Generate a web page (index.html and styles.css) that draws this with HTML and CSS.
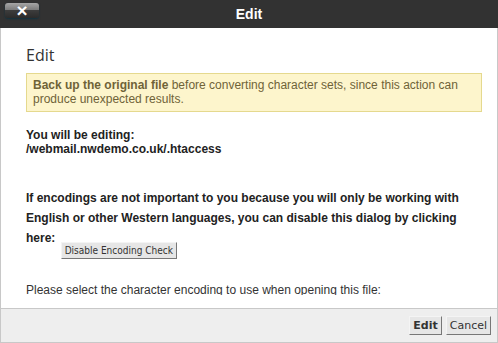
FILE: index.html
```html
<!DOCTYPE html>
<html lang="en">
<head>
  <meta charset="UTF-8" />
  <title>Edit</title>
  <link rel="stylesheet" href="styles.css">
</head>
<body>
  <div class="dialog">
    <div class="titlebar">
      <button class="close-btn" title="Close">&times;</button>
      <span class="title">Edit</span>
    </div>

    <div class="dialog-body">
      <div class="scroll">
        <h2>Edit</h2>
        <div class="warning">
          <strong>Back up the original file</strong> before converting character sets, since this action can produce unexpected results.
        </div>

        <p class="editing">
          You will be editing:<br>
          /webmail.nwdemo.co.uk/.htaccess
        </p>

        <p class="encoding-note">
          If encodings are not important to you because you will only be working with English or other Western languages, you can disable this dialog by clicking here:
          <button class="btn btn-small">Disable Encoding Check</button>
        </p>

        <p class="select-note">Please select the character encoding to use when opening this file:</p>
      </div>
    </div>

    <div class="footer">
      <button class="btn btn-primary">Edit</button>
      <button class="btn">Cancel</button>
    </div>
  </div>
</body>
</html>
```

FILE: styles.css
```css
body {
  margin: 0;
  font-family: "Liberation Sans", Arial, sans-serif;
  font-size: 12px;
  color: #222;
  background: #fff;
}
.dialog {
  width: 498px;
  height: 343px;
  display: flex;
  flex-direction: column;
}
.titlebar {
  position: relative;
  height: 28px;
  background: #323232;
  display: flex;
  align-items: center;
  justify-content: center;
}
.title {
  color: #fff;
  font-weight: bold;
  font-size: 14px;
}
.close-btn {
  position: absolute;
  left: 5px;
  top: 3px;
  width: 34px;
  height: 15px;
  padding: 0;
  border: none;
  border-radius: 3px;
  background: linear-gradient(#a6a6a6 0, #7c7c7c 45%, #3c3c3c 50%, #2b2b2b 100%);
  box-shadow: 0 1px 2px rgba(0, 50, 70, 0.7);
  color: #fff;
  font-family: "Liberation Sans", sans-serif;
  font-size: 19px;
  font-weight: bold;
  line-height: 15px;
}
.dialog-body {
  flex: 1;
  display: flex;
  flex-direction: column;
  border-left: 1px solid #c8c8c8;
  border-right: 1px solid #c8c8c8;
  padding-bottom: 13px;
  min-height: 0;
}
.scroll {
  flex: 1;
  overflow: hidden;
  padding: 16px 15px 0 25px;
}
h2 {
  margin: 0;
  font-family: "Open Sans", sans-serif;
  font-weight: normal;
  font-size: 16px;
  line-height: 22px;
  color: #333;
}
.warning {
  margin-top: 7px;
  background: #fdf5cc;
  border: 1px solid #e5d98e;
  padding: 4px 6px 5px;
  line-height: 14px;
  color: #6f6338;
}
.editing {
  margin: 16px 0 0;
  font-weight: bold;
  line-height: 14px;
}
.encoding-note {
  margin: 32px 0 0;
  font-weight: bold;
  line-height: 20px;
}
.select-note {
  margin: 24px 0 0;
  line-height: 14px;
  color: #333;
}
.btn {
  font-family: "DejaVu Sans", sans-serif;
  font-size: 11px;
  line-height: 13px;
  padding: 2px 3px;
  color: #333;
  background: #e6e6e6;
  border: 1px solid;
  border-color: #f4f4f4 #777 #777 #f4f4f4;
  border-radius: 0;
}
.btn-primary {
  font-weight: bold;
}
.btn-small {
  font-family: "DejaVu Sans Condensed", "DejaVu Sans", sans-serif;
  font-size: 10px;
  line-height: 13px;
  padding: 1px 3px;
  vertical-align: top;
  margin: 14px 0 0 2px;
}
.footer {
  height: 35px;
  box-sizing: border-box;
  background: #eee;
  border: 1px solid #c8c8c8;
  display: flex;
  justify-content: flex-end;
  align-items: flex-start;
  gap: 4px;
  padding: 7px 6px 0;
}
```
